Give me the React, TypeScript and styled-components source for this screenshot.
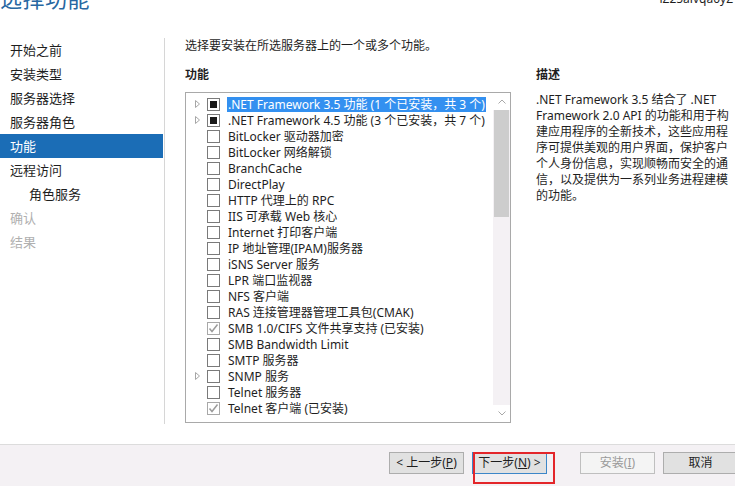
import React from "react";
import styled, { createGlobalStyle, css } from "styled-components";

const GlobalStyle = createGlobalStyle`
  html, body { margin: 0; padding: 0; background: #ffffff; }
  body {
    font-family: "Noto Sans", "Noto Sans CJK SC", sans-serif;
    font-size: 12px;
    color: #1e1e1e;
  }
  *, *::before, *::after { box-sizing: border-box; }
`;

const Page = styled.div`
  position: relative;
  width: 735px;
  height: 486px;
  overflow: hidden;
  display: flex;
  flex-direction: column;
  background: #ffffff;
`;

const Header = styled.div`
  height: 38px;
  flex: none;
  display: flex;
  justify-content: space-between;
  align-items: flex-start;
`;

const Title = styled.div`
  margin-top: -13px;
  font-size: 22px;
  line-height: 22px;
  color: #2767a2;
  letter-spacing: 0.5px;
`;

const ServerName = styled.div`
  margin-top: -8px;
  margin-right: 2px;
  font-size: 12px;
  line-height: 14px;
  color: #1e1e1e;
`;

const Body = styled.div`
  flex: 1;
  display: flex;
  padding-bottom: 20px;
  min-height: 0;
`;

const Nav = styled.nav`
  width: 165px;
  flex: none;
  border-right: 1px solid #d6d6d6;
  display: flex;
  flex-direction: column;
`;

const NavItem = styled.div<{ $active?: boolean; $disabled?: boolean; $indent?: boolean }>`
  height: 24px;
  line-height: 24px;
  font-size: 13px;
  padding-left: ${(p) => (p.$indent ? "29px" : "10px")};
  margin-right: 1px;
  color: ${(p) => (p.$disabled ? "#b0b0b0" : "#1e1e1e")};
  ${(p) =>
    p.$active &&
    css`
      background: #1b6db6;
      color: #ffffff;
    `}
`;

const Main = styled.div`
  flex: 1;
  padding-left: 20px;
  display: flex;
  flex-direction: column;
`;

const Instruction = styled.div`
  line-height: 16px;
  font-size: 12px;
`;

const Columns = styled.div`
  display: flex;
  gap: 25px;
  margin-top: 13px;
`;

const Column = styled.div<{ $width: number }>`
  width: ${(p) => p.$width}px;
  flex: none;
  display: flex;
  flex-direction: column;
`;

const SectionLabel = styled.div`
  line-height: 16px;
  font-weight: bold;
  font-size: 12px;
  margin-bottom: 9px;
`;

const ListBox = styled.div`
  height: 331px;
  border: 1px solid #a9a9a9;
  display: flex;
  background: #ffffff;
`;

const List = styled.div`
  flex: 1;
  padding-top: 3px;
  overflow: hidden;
`;

const Row = styled.div`
  height: 16px;
  display: flex;
  align-items: center;
  padding-left: 9px;
  white-space: nowrap;
`;

const ExpanderSlot = styled.span`
  width: 5px;
  height: 8px;
  flex: none;
  display: flex;
  margin-right: 7px;
`;

const CheckBox = styled.span<{ $state: "none" | "partial" | "checked" }>`
  width: 13px;
  height: 13px;
  flex: none;
  border: 1px solid ${(p) => (p.$state === "checked" ? "#a8a8a8" : "#7a7a7a")};
  background: #ffffff;
  display: flex;
  align-items: center;
  justify-content: center;
  margin-right: 7px;
`;

const PartialMark = styled.span`
  width: 7px;
  height: 7px;
  background: #1a1a1a;
`;

const Label = styled.span<{ $selected?: boolean }>`
  line-height: 15px;
  padding: 0 1px;
  ${(p) =>
    p.$selected &&
    css`
      background: #3390f0;
      color: #ffffff;
    `}
`;

const ScrollBar = styled.div`
  width: 17px;
  flex: none;
  display: flex;
  flex-direction: column;
  background: #f4f1f4;
`;

const ScrollArrow = styled.div`
  height: 17px;
  display: flex;
  align-items: center;
  justify-content: center;
  background: #ffffff;
`;

const ScrollThumb = styled.div`
  height: 107px;
  margin: 0 1px;
  background: #cdcdcd;
`;

const ScrollTrack = styled.div`
  flex: 1;
`;

const DescText = styled.div`
  line-height: 16px;
  font-size: 12px;
  white-space: nowrap;
  margin-top: -9px;
  padding-top: 9px;
`;

const Footer = styled.div`
  height: 42px;
  flex: none;
  border-top: 1px solid #dcdcdc;
  background: #f4f1f4;
  display: flex;
  justify-content: flex-end;
  align-items: flex-start;
  padding-top: 7px;
  margin-right: -3px;
`;

const ButtonGroup = styled.div<{ $gap: number }>`
  display: flex;
  gap: 8px;
  margin-left: ${(p) => p.$gap}px;
`;

const Button = styled.button<{ $primary?: boolean }>`
  width: 75px;
  height: 22px;
  padding: 0;
  font-family: "Noto Sans", "Noto Sans CJK SC", sans-serif;
  font-size: 12px;
  line-height: 20px;
  color: #1e1e1e;
  background: #e1e1e1;
  border: 1px solid ${(p) => (p.$primary ? "#3c86c8" : "#adadad")};
  &:disabled {
    background: #f4f4f4;
    border-color: #bfbfbf;
    color: #9a9a9a;
  }
`;

const Highlight = styled.div`
  position: relative;
  display: flex;
  &::after {
    content: "";
    position: absolute;
    left: 1px;
    top: 0;
    width: 82px;
    height: 32px;
    border: 2px solid #e3262a;
    pointer-events: none;
  }
`;

const U = styled.span`
  text-decoration: underline;
`;

type State = "none" | "partial" | "checked";
interface Feature {
  label: string;
  state: State;
  expand?: boolean;
  selected?: boolean;
}

const features: Feature[] = [
  { label: ".NET Framework 3.5 功能 (1 个已安装，共 3 个)", state: "partial", expand: true, selected: true },
  { label: ".NET Framework 4.5 功能 (3 个已安装，共 7 个)", state: "partial", expand: true },
  { label: "BitLocker 驱动器加密", state: "none" },
  { label: "BitLocker 网络解锁", state: "none" },
  { label: "BranchCache", state: "none" },
  { label: "DirectPlay", state: "none" },
  { label: "HTTP 代理上的 RPC", state: "none" },
  { label: "IIS 可承载 Web 核心", state: "none" },
  { label: "Internet 打印客户端", state: "none" },
  { label: "IP 地址管理(IPAM)服务器", state: "none" },
  { label: "iSNS Server 服务", state: "none" },
  { label: "LPR 端口监视器", state: "none" },
  { label: "NFS 客户端", state: "none" },
  { label: "RAS 连接管理器管理工具包(CMAK)", state: "none" },
  { label: "SMB 1.0/CIFS 文件共享支持 (已安装)", state: "checked" },
  { label: "SMB Bandwidth Limit", state: "none" },
  { label: "SMTP 服务器", state: "none" },
  { label: "SNMP 服务", state: "none", expand: true },
  { label: "Telnet 服务器", state: "none" },
  { label: "Telnet 客户端 (已安装)", state: "checked" },
];

const navItems = [
  { label: "开始之前" },
  { label: "安装类型" },
  { label: "服务器选择" },
  { label: "服务器角色" },
  { label: "功能", active: true },
  { label: "远程访问" },
  { label: "角色服务", indent: true },
  { label: "确认", disabled: true },
  { label: "结果", disabled: true },
];

const descLines = [
  ".NET Framework 3.5 结合了 .NET",
  "Framework 2.0 API 的功能和用于构",
  "建应用程序的全新技术，这些应用程",
  "序可提供美观的用户界面，保护客户",
  "个人身份信息，实现顺畅而安全的通",
  "信，以及提供为一系列业务进程建模",
  "的功能。",
];

const Triangle = () => (
  <svg width="5" height="8" viewBox="0 0 5 8">
    <polygon points="0.5,0.5 4.5,4 0.5,7.5" fill="none" stroke="#a6a6a6" strokeWidth="1" />
  </svg>
);

const Check = () => (
  <svg width="11" height="11" viewBox="0 0 11 11">
    <polyline points="1.5,5.5 4,8.5 9.5,1.5" fill="none" stroke="#9c9c9c" strokeWidth="1.5" />
  </svg>
);

const Chevron = ({ up }: { up?: boolean }) => (
  <svg width="8" height="5" viewBox="0 0 8 5">
    <polyline
      points={up ? "0.5,4.5 4,1 7.5,4.5" : "0.5,0.5 4,4 7.5,0.5"}
      fill="none"
      stroke="#a8a8a8"
      strokeWidth="1"
    />
  </svg>
);

export default function App() {
  return (
    <>
      <GlobalStyle />
      <Page>
        <Header>
          <Title>选择功能</Title>
          <ServerName>iZ25aivqa0yZ</ServerName>
        </Header>
        <Body>
          <Nav>
            {navItems.map((n) => (
              <NavItem key={n.label} $active={n.active} $disabled={n.disabled} $indent={n.indent}>
                {n.label}
              </NavItem>
            ))}
          </Nav>
          <Main>
            <Instruction>选择要安装在所选服务器上的一个或多个功能。</Instruction>
            <Columns>
              <Column $width={326}>
                <SectionLabel>功能</SectionLabel>
                <ListBox>
                  <List>
                    {features.map((f) => (
                      <Row key={f.label}>
                        <ExpanderSlot>{f.expand && <Triangle />}</ExpanderSlot>
                        <CheckBox $state={f.state}>
                          {f.state === "partial" && <PartialMark />}
                          {f.state === "checked" && <Check />}
                        </CheckBox>
                        <Label $selected={f.selected}>{f.label}</Label>
                      </Row>
                    ))}
                  </List>
                  <ScrollBar>
                    <ScrollArrow>
                      <Chevron up />
                    </ScrollArrow>
                    <ScrollThumb />
                    <ScrollTrack />
                    <ScrollArrow>
                      <Chevron />
                    </ScrollArrow>
                  </ScrollBar>
                </ListBox>
              </Column>
              <Column $width={200}>
                <SectionLabel>描述</SectionLabel>
                <DescText>
                  {descLines.map((l, i) => (
                    <div key={i}>{l}</div>
                  ))}
                </DescText>
              </Column>
            </Columns>
          </Main>
        </Body>
        <Footer>
          <ButtonGroup $gap={0}>
            <Button>
              &lt; 上一步(<U>P</U>)
            </Button>
            <Highlight>
              <Button $primary>
                下一步(<U>N</U>) &gt;
              </Button>
            </Highlight>
          </ButtonGroup>
          <ButtonGroup $gap={33}>
            <Button disabled>
              安装(<U>I</U>)
            </Button>
            <Button>取消</Button>
          </ButtonGroup>
        </Footer>
      </Page>
    </>
  );
}
